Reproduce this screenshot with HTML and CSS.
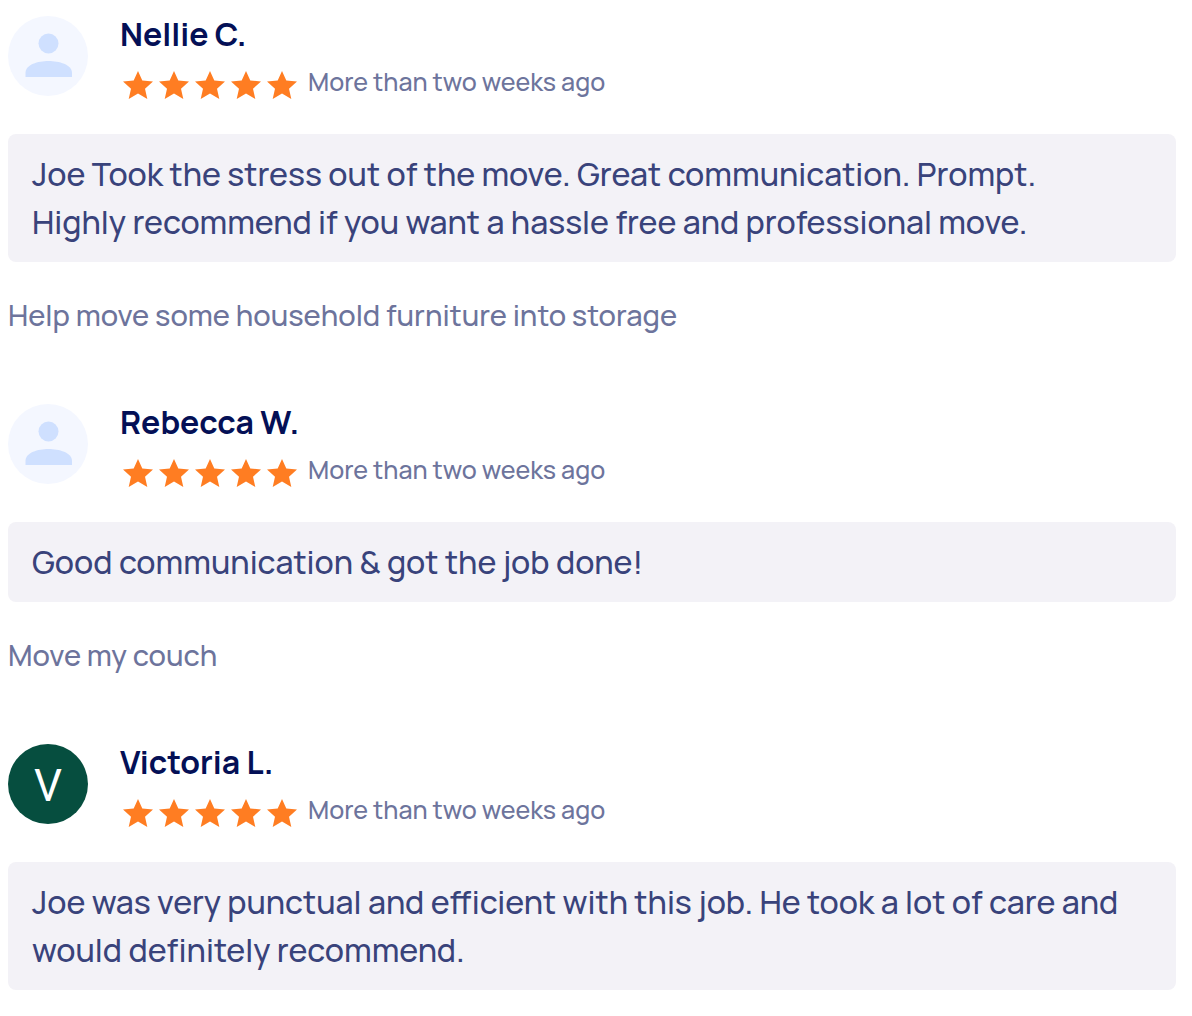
FILE: index.html
```html
<!DOCTYPE html>
<html lang="en">
<head>
<meta charset="utf-8">
<title>Reviews</title>
<link rel="stylesheet" href="styles.css">
</head>
<body>
<svg width="0" height="0" class="sprite" aria-hidden="true">
<symbol id="person" viewBox="0 0 80 80"><circle cx="40.500" cy="27.500" r="10"/><path d="M17.500 61V57C17.500 48.500 30 45 40.500 45S64 48.500 64 57V61Z"/></symbol>
<symbol id="stars" viewBox="0 0 180 36"><path id="star" d="M18 4L22.300 13.500L33 14.500L25 21.700L27.300 32L18 26.500L8.700 32L11 21.700L3 14.500L13.700 13.500Z"/><use href="#star" x="36"/><use href="#star" x="72"/><use href="#star" x="108"/><use href="#star" x="144"/></symbol>
</svg>
<main class="reviews">
<article class="review">
<header class="reviewer">
<div class="avatar"><svg class="person" aria-hidden="true"><use href="#person"/></svg></div>
<div class="details"><h2 class="name">Nellie C.</h2><div class="rating"><svg class="stars" role="img" aria-label="5 stars"><use href="#stars"/></svg><span class="date">More than two weeks ago</span></div></div>
</header>
<p class="comment">Joe Took the stress out of the move. Great communication. Prompt.<br>Highly recommend if you want a hassle free and professional move.</p>
<p class="task">Help move some household furniture into storage</p>
</article>
<article class="review">
<header class="reviewer">
<div class="avatar"><svg class="person" aria-hidden="true"><use href="#person"/></svg></div>
<div class="details"><h2 class="name">Rebecca W.</h2><div class="rating"><svg class="stars" role="img" aria-label="5 stars"><use href="#stars"/></svg><span class="date">More than two weeks ago</span></div></div>
</header>
<p class="comment">Good communication &amp; got the job done!</p>
<p class="task">Move my couch</p>
</article>
<article class="review">
<header class="reviewer">
<div class="avatar initial">V</div>
<div class="details"><h2 class="name">Victoria L.</h2><div class="rating"><svg class="stars" role="img" aria-label="5 stars"><use href="#stars"/></svg><span class="date">More than two weeks ago</span></div></div>
</header>
<p class="comment">Joe was very punctual and efficient with this job. He took a lot of care and would definitely recommend.</p>
</article>
</main>
</body>
</html>
```
FILE: styles.css
```css
* { box-sizing: border-box; }
body { margin: 0; background: #fff; font-family: Manrope, Inter, sans-serif; font-weight: 500; }
.sprite { position: absolute; }
.reviews { display: flex; flex-direction: column; gap: 68px; padding: 16px 16px 24px 8px; }
.review { display: flex; flex-direction: column; }
.reviewer { display: flex; align-items: flex-start; gap: 32px; margin-bottom: 31px; }
.avatar { flex: none; width: 80px; height: 80px; border-radius: 50%; background: #f4f7ff; }
.person { display: block; width: 80px; height: 80px; fill: #cfe0ff; }
.initial { background: #064e3f; color: #fff; font: 44px/84px Roboto, sans-serif; text-align: center; }
.details { display: flex; flex-direction: column; gap: 9px; }
.name { margin: 0; color: #041056; font-size: 32px; line-height: 36px; font-weight: 700; }
.rating { display: flex; align-items: flex-end; gap: 8px; }
.stars { width: 180px; height: 36px; fill: #ff7d22; }
.date { color: #6d749c; font-size: 25px; line-height: 42px; }
.comment { margin: 0; padding: 16px 24px; border-radius: 8px; background: #f3f2f7; color: #39437b; font-size: 32px; line-height: 48px; }
.task { margin: 32px 0 0; color: #6d749c; font-size: 29px; line-height: 42px; }
```
